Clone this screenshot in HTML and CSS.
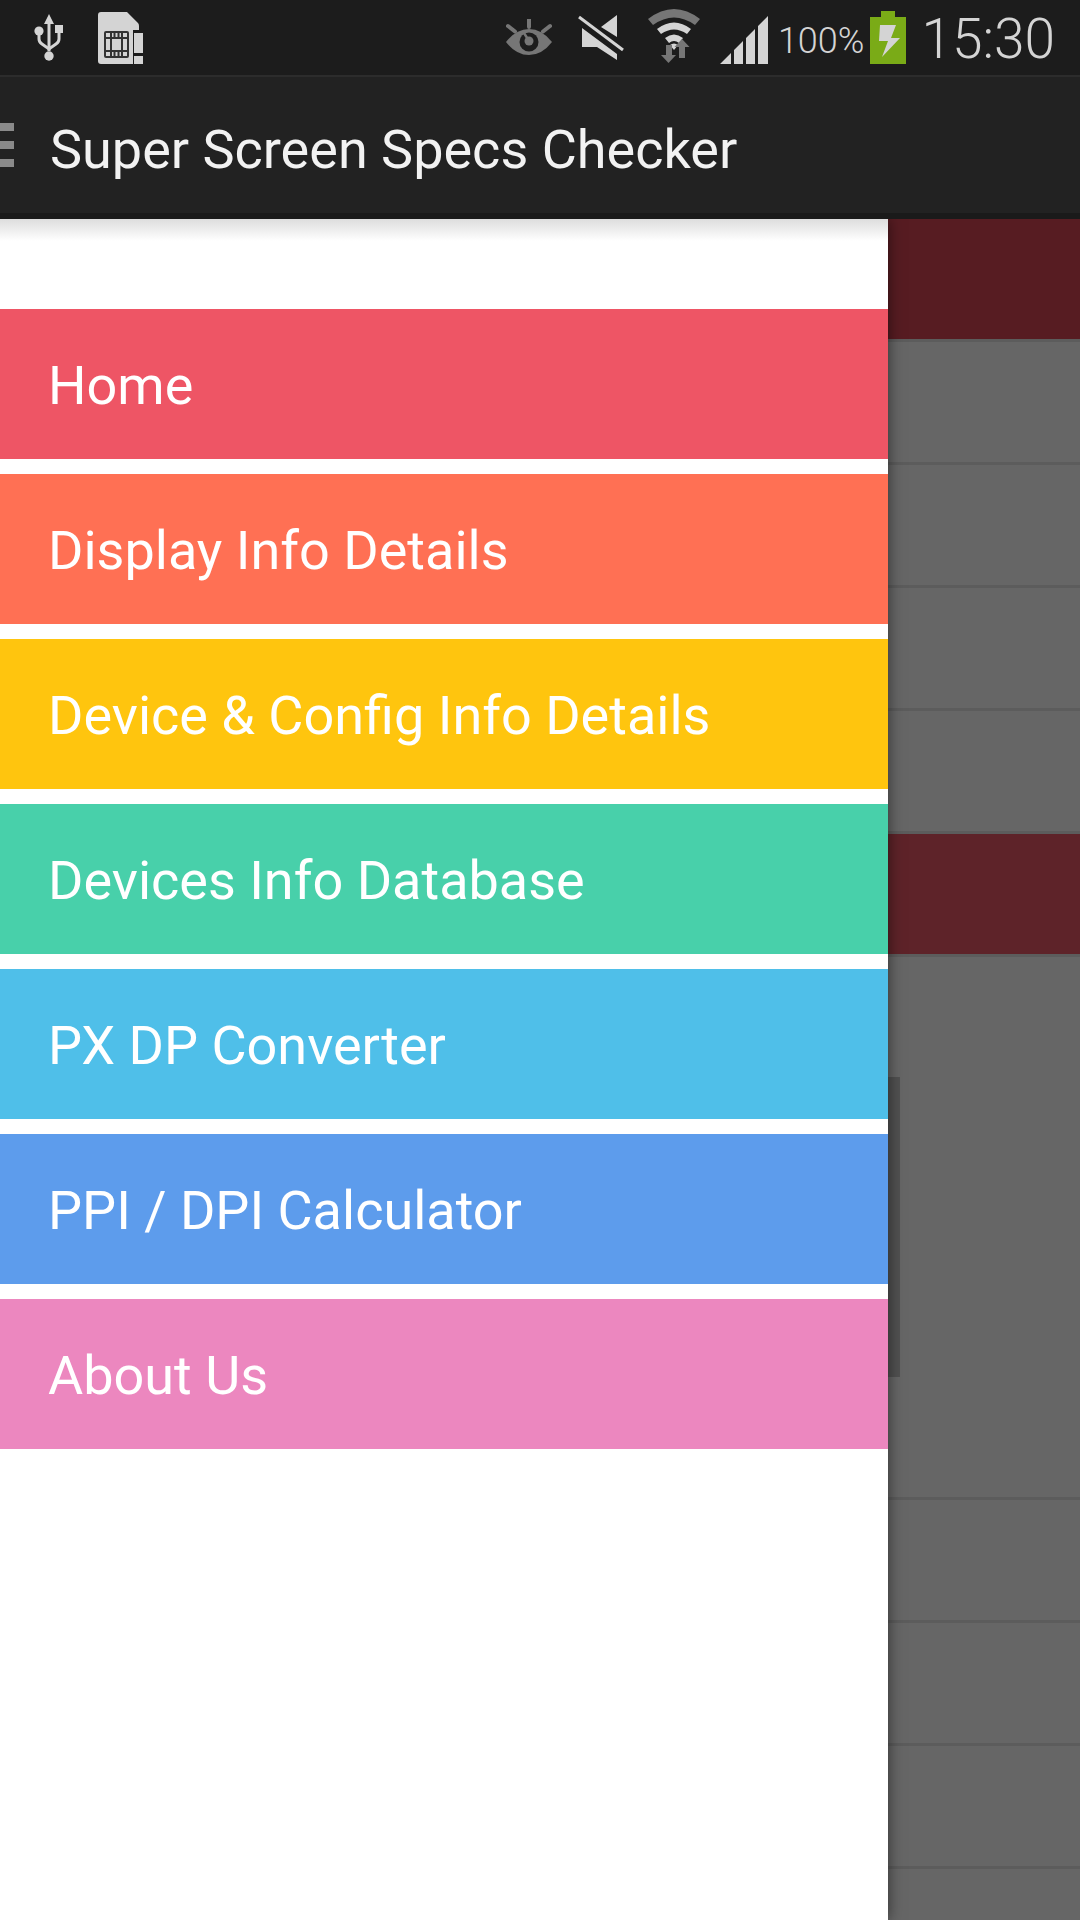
FILE: index.html

```html
<!DOCTYPE html>
<html lang="en">
<head>
  <meta charset="UTF-8">
  <meta name="viewport" content="width=device-width, initial-scale=1.0">
  <title>Super Screen Specs Checker</title>
  <link rel="stylesheet" href="styles.css">
</head>
<body>
  <div class="statusbar">
    <svg class="icon usb" width="30" height="48" viewBox="0 0 30 48">
      <path class="light" d="M15 0l5 10h-3.500v27h-3V10H10z"/>
      <circle class="light" cx="15" cy="42" r="4.700"/>
      <circle class="light" cx="5" cy="17" r="4.600"/>
      <rect class="light" x="21" y="11" width="8" height="8"/>
      <path class="line" d="M5 18v7q0 3 3 5l7 5 7-5q3-2 3-5v-8"/>
    </svg>
    <svg class="icon sim" width="45" height="52" viewBox="0 0 45 52">
      <path class="light" d="M3 0h26l11 11q1 1 1 3v4h-6v34H3q-3 0-3-3V3q0-3 3-3z"/>
      <rect class="light" x="36" y="21" width="9" height="20"/>
      <rect class="light" x="36" y="44" width="9" height="8"/>
      <rect class="chip" x="6" y="19" width="25" height="27" rx="2"/>
      <rect class="light" x="8" y="21" width="21" height="23"/>
      <path class="chip-cut" d="M13 20v25M24 20v25M8 26h21M8 39h21M16.500 20v6M20.500 20v6M16.500 39v6M20.500 39v6"/>
      <rect class="light" x="14" y="27" width="9" height="11"/>
    </svg>
    <div class="spacer"></div>
    <svg class="icon eye" width="46" height="36" viewBox="0 0 46 36">
      <path class="dim" d="M0 23q10-13 23-13t23 13q-10 13-23 13T0 23z"/>
      <circle class="ring" cx="23" cy="23" r="9.500"/>
      <circle class="dim" cx="23" cy="22" r="4.500"/>
      <path class="pointer" d="M23 22l-5-8"/>
      <path class="ray" d="M23 0v8M2 7l7 5.500M44 7l-7 5.500"/>
    </svg>
    <svg class="icon mute" width="46" height="46" viewBox="0 0 46 46">
      <path class="light" d="M23 12L39 0v22zM4 13l35 26v6L19 32H4z"/>
      <path class="slash-gap" d="M1 2l44 33"/>
      <path class="slash" d="M1 2l44 33"/>
    </svg>
    <svg class="icon wifi" width="52" height="54" viewBox="0 0 52 54">
      <path class="dim" d="M0 10Q26-10 52 10l-5 6Q26 1 5 16z"/>
      <path class="light" d="M9 20q17-13 34 0l-4 5q-13-9-26 0z"/>
      <path class="light" d="M17 29q9-7 18 0l-4 5q-5-4-10 0z"/>
      <path class="light" d="M22 36q4-3 8 0l-4 5z"/>
      <path class="dim" d="M18 36h6v10h4l-7.500 8-7.500-8h5z"/>
      <path class="dim" d="M34 30l7.500 8h-4.500v11h-6V38h-4.500z"/>
    </svg>
    <svg class="icon signal" width="48" height="48" viewBox="0 0 48 48">
      <path class="light" d="M0 48l11-11v11zM14 34l9-9v23h-9zM26 22l9-9v35h-9zM38 10l10-10v48H38z"/>
    </svg>
    <span class="batt-text">100%</span>
    <svg class="icon battery" width="36" height="53" viewBox="0 0 36 53">
      <path class="green" d="M11 0h14v6h11v47H0V6h11z"/>
      <path class="light" d="M10 14h16l-5 13h9L12 46l6-16h-9z"/>
    </svg>
    <span class="clock">15:30</span>
  </div>

  <div class="actionbar">
    <div class="burger"><i></i><i></i><i></i></div>
    <span class="title">Super Screen Specs Checker</span>
  </div>

  <div class="screen">
    <div class="row head"></div>
    <div class="row"></div>
    <div class="row"></div>
    <div class="row"></div>
    <div class="row"></div>
    <div class="row head second"></div>
    <div class="row tall"></div>
    <div class="row"></div>
    <div class="row"></div>
    <div class="row"></div>
    <div class="row"></div>

    <div class="scroll-thumb"></div>

    <div class="drawer">
      <a class="item home">Home</a>
      <a class="item display">Display Info Details</a>
      <a class="item device">Device &amp; Config Info Details</a>
      <a class="item database">Devices Info Database</a>
      <a class="item converter">PX DP Converter</a>
      <a class="item calc">PPI / DPI Calculator</a>
      <a class="item about">About Us</a>
    </div>
  </div>
</body>
</html>
```

FILE: styles.css

```css
html, body { margin: 0; padding: 0; }
body { width: 1080px; height: 1920px; overflow: hidden; background: #666; font-family: Roboto, "Liberation Sans", sans-serif; }

/* status bar */
.statusbar { display: flex; align-items: flex-start; height: 75px; background: #1c1c1c; border-bottom: 2px solid #2c2c2c; color: #d4d4d4; }
.icon { display: block; flex: none; }
.spacer { flex: 1; }
.usb { margin: 14px 0 0 34px; }
.sim { margin: 12px 0 0 34px; }
.eye { margin: 19px 0 0 0; }
.mute { margin: 15px 0 0 26px; }
.wifi { margin: 9px 0 0 24px; }
.signal { margin: 16px 0 0 20px; }
.battery { margin: 11px 0 0 6px; }
.batt-text { font-size: 36px; font-weight: 300; line-height: 36px; margin: 23px 0 0 10px; }
.clock { font-size: 55px; font-weight: 300; line-height: 55px; margin: 12px 25px 0 15px; }

.light { fill: #d4d4d4; }
.dim { fill: #767676; }
.green { fill: #7aab17; }
.line { fill: none; stroke: #d4d4d4; stroke-width: 3; }
.chip { fill: #333; }
.chip-cut { fill: none; stroke: #333; stroke-width: 2; }
.ring { fill: #1c1c1c; }
.pointer { stroke: #767676; stroke-width: 2.500; }
.ray { fill: none; stroke: #767676; stroke-width: 4; stroke-linecap: round; }
.slash-gap { fill: none; stroke: #1c1c1c; stroke-width: 9; }
.slash { fill: none; stroke: #d4d4d4; stroke-width: 3; }

/* action bar */
.actionbar { display: flex; align-items: center; height: 136px; background: #222; border-bottom: 6px solid #1a1a1a; }
.burger { display: flex; flex-direction: column; gap: 10px; width: 14px; margin-right: 36px; }
.burger i { display: block; height: 8px; background: #8a8a8a; }
.title { font-size: 54px; color: #f2f2f2; padding-top: 9px; }

/* list behind the drawer */
.screen { position: relative; height: 1701px; overflow: hidden; }
.row { height: 120px; background: #666; border-bottom: 3px solid #5c5c5c; }
.row.head { background: #571c22; }
.row.second { background: #5e2329; }
.row.tall { height: 540px; }
.scroll-thumb { position: absolute; left: 888px; top: 858px; width: 12px; height: 300px; background: rgba(0, 0, 0, 0.2); }

/* drawer */
.drawer { position: absolute; left: 0; top: 0; bottom: 0; width: 888px; padding-top: 90px; box-sizing: border-box; background: #fff; display: flex; flex-direction: column; gap: 15px; box-shadow: 0 0 14px rgba(0, 0, 0, 0.55); }
.drawer::before { content: ""; position: absolute; left: 0; right: 0; top: 0; height: 22px; background: linear-gradient(#ddd, #fff); }
.item { display: flex; align-items: center; height: 150px; padding-left: 48px; font-size: 54px; color: #fff; padding-top: 2px; box-sizing: border-box; }
.home { background: #ee5565; }
.display { background: #ff7054; }
.device { background: #ffc50e; }
.database { background: #48d0aa; }
.converter { background: #4fbfe9; }
.calc { background: #5d9cec; }
.about { background: #ec87bf; }
```
